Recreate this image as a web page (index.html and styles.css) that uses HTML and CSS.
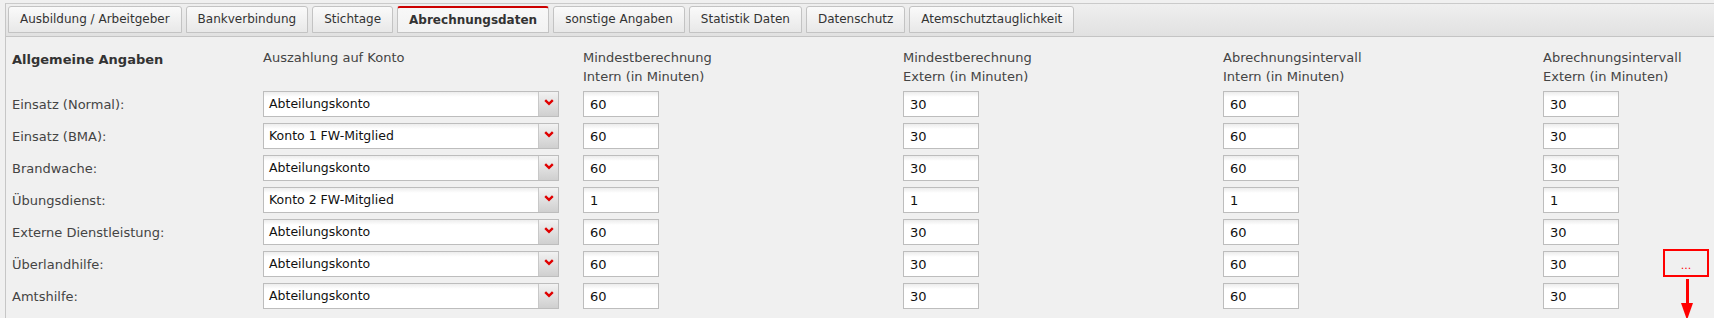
FILE: index.html
```html
<!doctype html>
<html lang="de">
<head>
	<meta charset="UTF-8">
	<title>Abrechnungsdaten</title>
	<link rel="stylesheet" href="styles.css">
</head>
<body>
	<div class="panel">
		<ul class="tabs">
			<li>Ausbildung / Arbeitgeber</li>
			<li>Bankverbindung</li>
			<li>Stichtage</li>
			<li class="active">Abrechnungsdaten</li>
			<li>sonstige Angaben</li>
			<li>Statistik Daten</li>
			<li>Datenschutz</li>
			<li>Atemschutztauglichkeit</li>
		</ul>
		<div class="body">
			<div class="head">
				<div class="title">Allgemeine Angaben</div>
				<div>Auszahlung auf Konto</div>
				<div>Mindestberechnung<br>Intern (in Minuten)</div>
				<div>Mindestberechnung<br>Extern (in Minuten)</div>
				<div>Abrechnungsintervall<br>Intern (in Minuten)</div>
				<div>Abrechnungsintervall<br>Extern (in Minuten)</div>
			</div>
			<div class="rows" id="rows"></div>

			<!-- Markierung -->
			<div class="mark"><span>...</span></div>
			<div class="arrow"></div>
		</div>
	</div>
	<script>
		var data = [
			['Einsatz (Normal):','Abteilungskonto','60','30','60','30'],
			['Einsatz (BMA):','Konto 1 FW-Mitglied','60','30','60','30'],
			['Brandwache:','Abteilungskonto','60','30','60','30'],
			['Übungsdienst:','Konto 2 FW-Mitglied','1','1','1','1'],
			['Externe Dienstleistung:','Abteilungskonto','60','30','60','30'],
			['Überlandhilfe:','Abteilungskonto','60','30','60','30'],
			['Amtshilfe:','Abteilungskonto','60','30','60','30']
		];
		var html = '';
		for(var i=0;i<data.length;i++){
			var r = data[i];
			html += "<div class='row'>";
			html += "	<label>"+r[0]+"</label>";
			html += "	<div class='combo'><span>"+r[1]+"</span><b class='trigger'><svg width='10' height='7' viewBox='0 0 10 7'><path d='M1.2 1.2 L5 4.8 L8.8 1.2' fill='none' stroke='#e00000' stroke-width='2.4'/></svg></b></div>";
			for(var j=2;j<6;j++){
				html += "	<div><input type='text' value='"+r[j]+"'></div>";
			}
			html += "</div>";
		}
		rows.innerHTML = html;
	</script>
</body>
</html>
```

FILE: styles.css
```css
*,*::before,*::after{box-sizing:border-box;}
html,body,ul,li{
	margin:0;padding:0;
	list-style:none;
}
html{
	font-family:"DejaVu Sans",Verdana,sans-serif;
	font-size:13px;
	color:#444;
}
body{
	background:#f0f0f0;
	overflow:hidden;
	height:318px;
}
.panel{
	margin:3px 0 0 5px;
	border-top:1px solid #cacaca;
	border-left:1px solid #c6c6c6;
	height:315px;
}
.tabs{
	display:flex;
	gap:4px;
	padding:2px 0 3px 2px;
	background:linear-gradient(#efefef,#e1e1e1);
	border-bottom:1px solid #c4c4c4;
}
.tabs li{
	height:27px;
	line-height:25px;
	padding:0 11px;
	border:1px solid #c3c3c3;
	border-radius:3px 3px 0 0;
	background:linear-gradient(#fafafa,#e8e8e8);
	color:#333;
	font-size:12px;
	white-space:nowrap;
}
.tabs li.active{
	border-top:2px solid #cc0000;
	line-height:24px;
	background:linear-gradient(#f8f8f8,#f2f2f2);
	font-weight:bold;
}
.body{
	position:relative;
	padding:11px 0 0 6px;
	height:281px;
}
.head,.row{
	display:grid;
	grid-template-columns:251px 320px 320px 320px 320px 1fr;
	align-items:center;
}
.head{
	align-items:start;
	line-height:19px;
	height:38px;
	margin-bottom:5px;
}
.head .title{
	font-weight:bold;
	color:#333;
	padding-top:2px;
}
.rows{
	display:flex;
	flex-direction:column;
	gap:6px;
}
.row{
	height:26px;
}
.row label{
	color:#444;
}
.combo{
	display:flex;
	width:296px;
	height:26px;
	border:1px solid #bdbdbd;
	background:#fff;
	color:#111;
	font-size:12.5px;
}
.combo span{
	flex:1;
	line-height:24px;
	padding-left:5px;
	background:linear-gradient(#ededed,#fff 5px);
}
.combo .trigger{
	width:20px;
	border-left:1px solid #c8c8c8;
	background:linear-gradient(#f2f2f2,#cfcfcf);
	display:flex;
	justify-content:center;
	padding-top:7px;
}
.combo .trigger svg{display:block;}
.row input{
	width:76px;
	height:26px;
	border:1px solid #bdbdbd;
	background:linear-gradient(#ececec,#fff 5px);
	font-family:inherit;
	font-size:13px;
	color:#111;
	padding:0 6px;
	outline:0;
	margin:0;
}
.mark{
	position:absolute;
	left:1657px;
	top:212px;
	width:46px;
	height:28px;
	border:2px solid #f00;
	text-align:center;
	color:#f00;
	font-size:11px;
	line-height:30px;
}
.arrow{
	position:absolute;
	left:1680px;
	top:242px;
	width:3px;
	height:26px;
	background:#f00;
}
.arrow::after{
	content:"";
	position:absolute;
	left:-5px;
	top:24px;
	border-left:6.5px solid transparent;
	border-right:6.5px solid transparent;
	border-top:17px solid #f00;
}
```
